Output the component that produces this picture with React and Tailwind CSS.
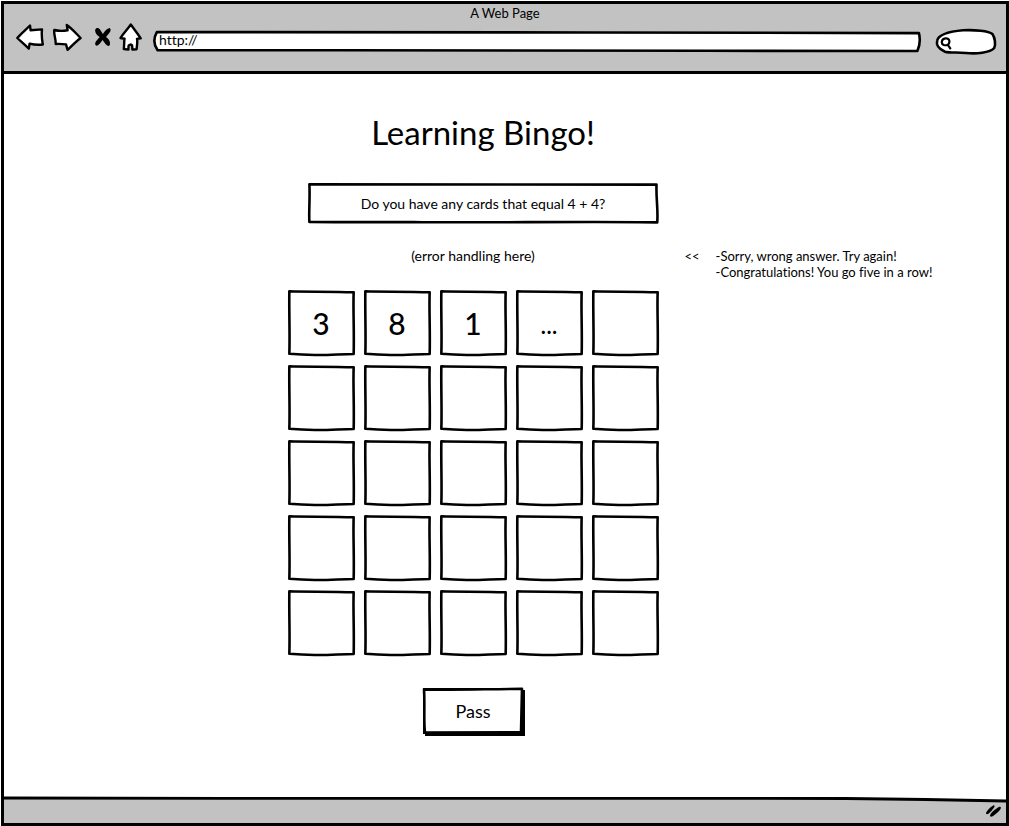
import React from "react";

const cellLabels = ["3", "8", "1", "..."];
const cells = Array.from({ length: 25 }, (_, i) => cellLabels[i] ?? "");

/* Hand-drawn outline that stretches to fill its positioned parent. */
function Sketch({ d }) {
  return (
    <svg
      className="pointer-events-none absolute inset-0 h-full w-full overflow-visible"
      viewBox="0 0 100 100"
      preserveAspectRatio="none"
      aria-hidden="true"
    >
      <path
        d={d}
        fill="#fff"
        stroke="#000"
        strokeWidth="2.6"
        strokeLinejoin="round"
        strokeLinecap="round"
        vectorEffect="non-scaling-stroke"
      />
    </svg>
  );
}

const CELL = "M2 2 C30 3 65 2 98 3.5 C97 30 99 65 98 97 C80 97 60 99 40 98.5 Q20 98 2 96.5 C3 70 1.5 40 2 2Z";
const QUESTION = "M0.4 3 C30 3 60 5 99.3 4 C99.1 35 99.8 65 99.5 96 C80 93 45 98 30 95 Q15 96 0.4 95 C0.2 70 0.6 40 0.4 3Z";
const ADDRESS = "M0.5 5 C20 4 70 8 99.6 10 Q99.9 55 99.4 95 C75 92 45 98 25 92 L0.6 92 Q-0.2 50 0.5 5Z";
const SEARCH = "M15 91 C4 80 0 62 2 46 C5 18 26 9 45 5 C64 3 88 7 94 20 C98 33 100 62 97 76 C90 96 66 100 50 96 C36 92 24 97 15 91Z";
const PASS = "M1 3 C35 5 65 2 99 2 L98 96 L2 97 C0.5 70 2 40 1 3Z";

function BackIcon() {
  return (
    <svg width="28" height="28" viewBox="0 0 28 28" fill="#fff" stroke="#000" strokeWidth="2.4" strokeLinejoin="round" aria-hidden="true">
      <path d="M1.3 15 C5 10.5 9 7.5 14 2.5 L14.6 7.3 L26 6.4 C25.4 12 25.8 16 26.8 21.5 Q20 22.3 13.6 20.6 L12.8 25.6 C9 22 5 18.5 1.3 15Z" />
    </svg>
  );
}

function ForwardIcon() {
  return (
    <svg width="30" height="28" viewBox="0 0 30 28" fill="#fff" stroke="#000" strokeWidth="2.4" strokeLinejoin="round" aria-hidden="true">
      <path d="M2.3 7 Q8 8.5 15.6 7.3 L14.8 2 C20 5.5 24 10.5 28.6 15 C24 18.5 20 22.5 15.6 27 L14 21.4 Q9 20.7 3.7 21 C4 16 1.5 11 2.3 7Z" />
    </svg>
  );
}

function StopIcon() {
  return (
    <svg width="18" height="20" viewBox="0 0 18 20" aria-hidden="true">
      <path d="M1.2 3 C2 .2 5 .8 6 2.6 L8.9 7 C11 4 12.8 1.5 15.8 1 C18 3.8 15.5 6 12 10 C15 12 17 15 15.5 18.6 C13 20 11 16 8.5 13 C6.5 16 4.5 19 2 18.6 C-.5 16 3 13 5.7 10 C3 8 .8 6 1.2 3Z" />
    </svg>
  );
}

function HomeIcon() {
  return (
    <svg width="23" height="28" viewBox="0 0 23 28" fill="#fff" stroke="#000" strokeWidth="2.4" strokeLinejoin="round" aria-hidden="true">
      <path d="M1.5 15 C4 10.5 8 7 11.8 1.5 C15 6 19 11 21.7 15.3 L18 15.9 C18.8 19 17.8 23 17.6 26.3 L13.4 26.6 L13.1 22.5 Q11 20.6 9.6 22.6 L9.4 26.6 L4.8 26 C5.3 22.5 5 19 5.5 15.7Z" />
    </svg>
  );
}

export default function App() {
  return (
    <div className="min-h-screen bg-white pt-px pl-px font-['Lato',sans-serif] text-black [font-variant-ligatures:none]">
      <div className="flex min-h-[calc(100vh-1px)] flex-col border-3 border-black">
        <header className="border-b-3 border-black bg-[#c2c2c2] pb-[19px]">
          <h1 className="text-center text-[13px] leading-[18px]">A Web Page</h1>
          <div className="flex h-[30px] items-center pr-[10px] pl-3">
            <button type="button" aria-label="Back" className="mr-2"><BackIcon /></button>
            <button type="button" aria-label="Forward" className="mr-3"><ForwardIcon /></button>
            <button type="button" aria-label="Stop" className="mr-[7px]"><StopIcon /></button>
            <button type="button" aria-label="Home" className="mr-[11px]"><HomeIcon /></button>
            <div className="relative mt-2 h-[21px] flex-1">
              <Sketch d={ADDRESS} />
              <input
                type="text"
                aria-label="Address"
                defaultValue="http://"
                className="relative block h-5 w-full bg-transparent px-[6px] pb-[2px] text-sm outline-none"
              />
            </div>
            <div className="relative mt-2 ml-[14px] h-[25px] w-[60px]">
              <Sketch d={SEARCH} />
              <svg className="absolute top-2 left-1" width="13" height="14" viewBox="0 0 13 14" fill="none" stroke="#000" strokeWidth="2.2" strokeLinecap="round" aria-hidden="true">
                <path d="M5.4 1.4 C9 1 9.8 3.4 9.2 5.8 C8.6 8.2 6 8.6 3.8 8 C.8 7 1 2 5.4 1.4Z M8 8 L10.2 11.4" />
              </svg>
              <input type="search" aria-label="Search" className="relative block h-full w-full bg-transparent pr-2 pl-5 text-sm outline-none" />
            </div>
          </div>
        </header>

        <main className="grid flex-1 grid-cols-[1fr_auto_1fr] content-start pt-[38px] pr-16 pb-14">
          <h2 className="col-start-2 pl-5 text-center text-[33px] leading-10">Learning Bingo!</h2>

          <div className="relative col-start-2 mt-[31px] ml-5 flex h-[41px] items-center justify-center">
            <Sketch d={QUESTION} />
            <p className="relative text-sm leading-4">Do you have any cards that equal 4 + 4?</p>
          </div>

          <p className="col-start-2 mt-6 text-center text-sm leading-4">(error handling here)</p>
          <div className="col-start-3 mt-6 flex h-4 gap-4 pl-[26px] text-[13px] leading-4 whitespace-nowrap">
            <span>&lt;&lt;</span>
            <p>
              -Sorry, wrong answer. Try again!
              <br />
              -Congratulations! You go five in a row!
            </p>
          </div>

          <div className="col-start-2 mt-[26px] grid grid-cols-5 gap-[9px]">
            {cells.map((label, i) => (
              <button key={i} type="button" aria-label={label || `Card ${i + 1}`} className="relative flex h-[66px] w-[67px] items-center justify-center">
                <Sketch d={CELL} />
                <span className="relative text-3xl leading-8 font-medium">
                  {label === "..." ? <span className="text-2xl leading-8">{label}</span> : label}
                </span>
              </button>
            ))}
          </div>

          <button type="button" className="relative col-start-2 mt-8 h-[46px] w-[100px] justify-self-center bg-black text-lg shadow-[2px_2px_0_#000]">
            <Sketch d={PASS} />
            <span className="relative">Pass</span>
          </button>
        </main>

        <footer className="relative flex h-6 items-center justify-end bg-[#c2c2c2] pr-1">
          <svg className="pointer-events-none absolute inset-x-0 -top-1 h-2 w-full" viewBox="0 0 100 8" preserveAspectRatio="none" aria-hidden="true">
            <path d="M0 0 H100 V6 Q92 4 84 3.5 C65 2 30 4 0 3Z" fill="#fff" />
            <path d="M0 3 C30 4 65 2 84 3.5 Q92 4 100 6" fill="none" stroke="#000" strokeWidth="2.8" vectorEffect="non-scaling-stroke" />
          </svg>
          <svg className="relative" width="17" height="14" viewBox="0 0 17 14" aria-hidden="true">
            <path d="M1 9.5 C1 7 6 2.5 8.5 1.2 C10.5 1 9.5 3.5 8 5 C6 7.5 2.5 12 1 9.5Z M5 12 C5 9.5 10 5 14 3 C17 2.2 16 5 14 7 C11 10 6 14.5 5 12Z" />
          </svg>
        </footer>
      </div>
    </div>
  );
}
